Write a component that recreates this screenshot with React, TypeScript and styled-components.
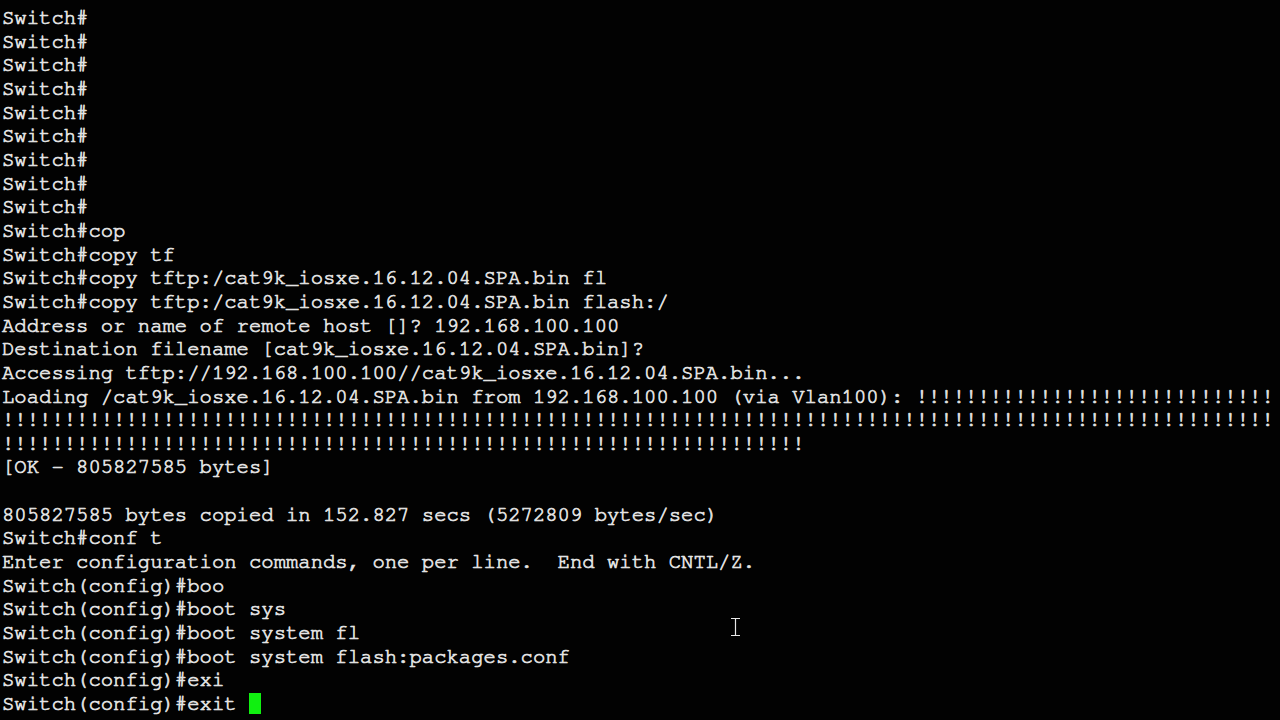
import React from "react";
import styled, { createGlobalStyle } from "styled-components";

const Global = createGlobalStyle`
  html, body { margin: 0; padding: 0; background: #000; }
  body { width: 1280px; height: 720px; overflow: hidden; }
`;

const Screen = styled.div`
  position: relative;
  width: 1280px;
  height: 720px;
  background: #020202;
  overflow: hidden;
  padding: 7px 0 0 2px;
  box-sizing: border-box;
`;

const Output = styled.div`
  display: flex;
  flex-direction: column;
  font-family: "Nimbus Mono PS", "Nimbus Mono L", "FreeMono", "Courier 10 Pitch", "Liberation Mono", monospace;
  font-size: 20.58px;
  font-weight: normal;
  -webkit-text-stroke: 0.7px #e4e4e4;
  line-height: 23.66px;
  color: #e4e4e4;
  white-space: pre;
`;

const Line = styled.div`
  height: 23.66px;
`;

const Cursor = styled.span`
  display: inline-block;
  width: 12px;
  height: 21px;
  background: #10f010;
  vertical-align: -4px;
`;

const Pointer = styled.svg`
  position: absolute;
  left: 729px;
  top: 617px;
`;

const bangs = (n: number) => "!".repeat(n);

const lines: string[] = [
  "Switch#",
  "Switch#",
  "Switch#",
  "Switch#",
  "Switch#",
  "Switch#",
  "Switch#",
  "Switch#",
  "Switch#",
  "Switch#cop",
  "Switch#copy tf",
  "Switch#copy tftp:/cat9k_iosxe.16.12.04.SPA.bin fl",
  "Switch#copy tftp:/cat9k_iosxe.16.12.04.SPA.bin flash:/",
  "Address or name of remote host []? 192.168.100.100",
  "Destination filename [cat9k_iosxe.16.12.04.SPA.bin]?",
  "Accessing tftp://192.168.100.100//cat9k_iosxe.16.12.04.SPA.bin...",
  "Loading /cat9k_iosxe.16.12.04.SPA.bin from 192.168.100.100 (via Vlan100): " + bangs(29),
  bangs(103),
  bangs(65),
  "[OK - 805827585 bytes]",
  "",
  "805827585 bytes copied in 152.827 secs (5272809 bytes/sec)",
  "Switch#conf t",
  "Enter configuration commands, one per line.  End with CNTL/Z.",
  "Switch(config)#boo",
  "Switch(config)#boot sys",
  "Switch(config)#boot system fl",
  "Switch(config)#boot system flash:packages.conf",
  "Switch(config)#exi",
];

export default function App() {
  return (
    <>
      <Global />
      <Screen>
        <Output>
          {lines.map((l, i) => (
            <Line key={i}>{l}</Line>
          ))}
          <Line>
            {"Switch(config)#exit "}
            <Cursor />
          </Line>
        </Output>
        <Pointer width="13" height="20" viewBox="0 0 13 20">
          <path d="M2 1.5h9M6.5 1.5v17M2 18.5h9" stroke="#000" strokeWidth="3" fill="none" />
          <path d="M2 1.5h9M6.5 1.5v17M2 18.5h9" stroke="#e8e8e8" strokeWidth="1.2" fill="none" />
        </Pointer>
      </Screen>
    </>
  );
}
